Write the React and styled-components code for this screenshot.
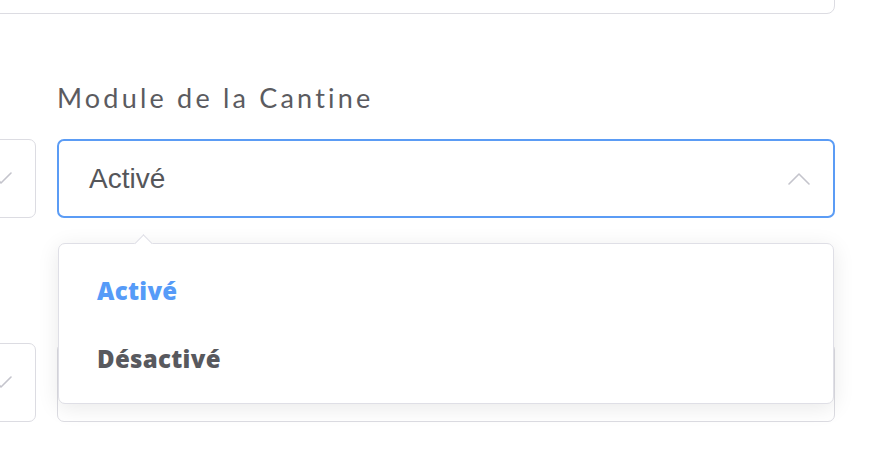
import React from "react";
import styled, { createGlobalStyle } from "styled-components";

const Global = createGlobalStyle`
  html, body { margin: 0; padding: 0; background: #ffffff; }
  body { overflow: hidden; width: 874px; height: 454px; }
`;

const Page = styled.div`
  width: 874px;
  height: 454px;
  overflow: hidden;
  background: #fff;
`;

const Form = styled.div`
  display: flex;
  flex-direction: column;
  gap: 68px;
  margin-left: -242px;
  width: 1077px;
`;

const TopBox = styled.div`
  height: 50px;
  margin-top: -36px;
  box-sizing: border-box;
  border: 1.5px solid #dcdce2;
  border-radius: 8px;
  background: #fff;
`;

const Row = styled.div`
  display: grid;
  grid-template-columns: 278px 778px;
  column-gap: 21px;
`;

const Field = styled.div`
  display: flex;
  flex-direction: column;
  gap: 25px;
`;

const Label = styled.div`
  height: 32px;
  line-height: 32px;
  font-family: "Lato", "Noto Sans", sans-serif;
  font-size: 27px;
  letter-spacing: 3.2px;
  color: #5b5b60;
  white-space: nowrap;
  overflow: hidden;
`;

const SelectWrap = styled.div`
  position: relative;
`;

const SelectBox = styled.div`
  height: 79px;
  box-sizing: border-box;
  border: ${(p) => (p.$open ? "2px solid #5b9cf5" : "1.5px solid #dcdce2")};
  border-radius: 7px;
  background: #fff;
  display: flex;
  align-items: center;
  justify-content: space-between;
  padding: 0 23px 0 30px;
`;

const Value = styled.span`
  font-family: "Liberation Sans", Arial, sans-serif;
  font-size: 28px;
  color: #55565a;
`;

const Chevron = ({ up }) => (
  <svg width="22" height="13" viewBox="0 0 22 13" fill="none">
    <path
      d={up ? "M1 12 L11 2 L21 12" : "M1 1 L11 11 L21 1"}
      stroke="#c4c4cc"
      strokeWidth="1.6"
      strokeLinecap="round"
      strokeLinejoin="round"
    />
  </svg>
);

const Dropdown = styled.div`
  position: absolute;
  top: calc(100% + 25px);
  left: 1px;
  right: 1px;
  height: 161px;
  box-sizing: border-box;
  background: #fff;
  border: 1.5px solid #dfdfe6;
  border-radius: 7px;
  box-shadow: 0 4px 22px rgba(0, 0, 0, 0.09);
  padding: 30px 38px 0;
  display: flex;
  flex-direction: column;
  gap: 34px;
  z-index: 5;

  &::before {
    content: "";
    position: absolute;
    top: -7px;
    left: 78px;
    width: 12px;
    height: 12px;
    background: #fff;
    border-top: 1.5px solid #dfdfe6;
    border-left: 1.5px solid #dfdfe6;
    transform: rotate(45deg);
  }
`;

const Option = styled.div`
  font-family: "Open Sans", "Noto Sans", sans-serif;
  font-weight: 800;
  font-size: 24px;
  line-height: 34px;
  letter-spacing: 0.3px;
  color: ${(p) => (p.$active ? "#569bf8" : "#58595e")};
`;

export default function App() {
  return (
    <Page>
      <Global />
      <Form>
        <TopBox />
        <Row>
          <Field>
            <Label />
            <SelectBox>
              <span />
              <Chevron />
            </SelectBox>
          </Field>
          <Field>
            <Label>Module de la Cantine</Label>
            <SelectWrap>
              <SelectBox $open>
                <Value>Activé</Value>
                <Chevron up />
              </SelectBox>
              <Dropdown>
                <Option $active>Activé</Option>
                <Option>Désactivé</Option>
              </Dropdown>
            </SelectWrap>
          </Field>
        </Row>
        <Row>
          <Field>
            <Label />
            <SelectBox>
              <span />
              <Chevron />
            </SelectBox>
          </Field>
          <Field>
            <Label />
            <SelectBox>
              <span />
              <Chevron />
            </SelectBox>
          </Field>
        </Row>
      </Form>
    </Page>
  );
}
